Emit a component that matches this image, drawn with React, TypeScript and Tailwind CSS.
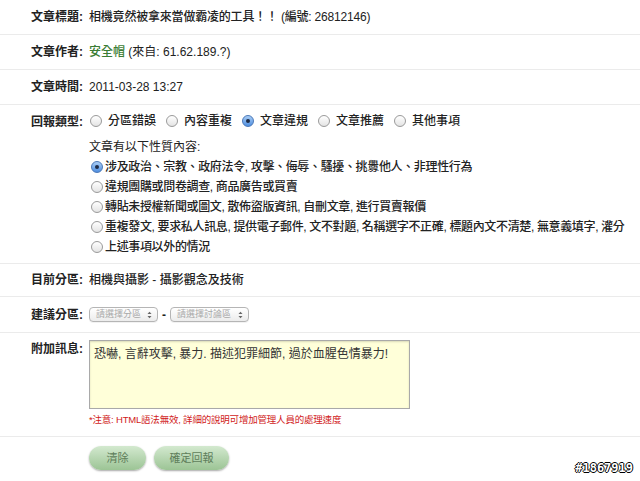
import React from 'react';

const font = { fontFamily: '"Liberation Sans", "Noto Sans CJK TC", sans-serif' };

const Radio: React.FC<{ checked?: boolean }> = ({ checked }) => (
  <span
    className={`inline-flex items-center justify-center w-[12px] h-[12px] rounded-full border shrink-0 ${
      checked
        ? 'border-[#4a78b8] bg-gradient-to-b from-[#a9cdf5] to-[#4f8fe0]'
        : 'border-[#9a9a9a] bg-gradient-to-b from-[#ffffff] to-[#e4e4e4]'
    }`}
  >
    {checked && <span className="w-[4px] h-[4px] rounded-full bg-[#1d2b45]" />}
  </span>
);

const Row: React.FC<{ label: string; className?: string; children: React.ReactNode }> = ({
  label,
  className,
  children,
}) => (
  <div className={`flex border-b border-[#ebebeb] pl-[31px] ${className ?? ''}`}>
    <div className="w-[58px] shrink-0 font-bold text-[#222]">{label}</div>
    <div className="flex-1">{children}</div>
  </div>
);

const Select: React.FC<{ text: string; w: string }> = ({ text, w }) => (
  <span
    className={`${w} h-[15px] inline-flex items-center justify-between rounded-[4px] border border-[#b5b5b5] bg-gradient-to-b from-[#ffffff] to-[#ececec] pl-[6px] pr-[5px] text-[9px] text-[#a8a8a8] shadow-[0_1px_0_rgba(0,0,0,0.05)]`}
  >
    <span className="whitespace-nowrap">{text}</span>
    <svg width="5" height="8" viewBox="0 0 5 8" className="shrink-0">
      <path d="M0.5 3 L2.5 0.8 L4.5 3 Z" fill="#666" />
      <path d="M0.5 5 L2.5 7.2 L4.5 5 Z" fill="#666" />
    </svg>
  </span>
);

export default function App() {
  const types = [
    { t: '分區錯誤' },
    { t: '內容重複' },
    { t: '文章違規', c: true },
    { t: '文章推薦' },
    { t: '其他事項' },
  ];
  const reasons = [
    { t: '涉及政治、宗教、政府法令, 攻擊、侮辱、騷擾、挑釁他人、非理性行為', c: true },
    { t: '違規團購或問卷調查, 商品廣告或買賣' },
    { t: '轉貼未授權新聞或圖文, 散佈盜版資訊, 自刪文章, 進行買賣報價' },
    { t: '重複發文, 要求私人訊息, 提供電子郵件, 文不對題, 名稱選字不正確, 標題內文不清楚, 無意義填字, 灌分' },
    { t: '上述事項以外的情況' },
  ];

  return (
    <div className="w-[640px] h-[481px] bg-white text-[12px] text-[#222] relative overflow-hidden" style={font}>
      <Row label="文章標題:" className="h-[35px] items-center">
        <span className="font-medium tracking-[-0.2px]">相機竟然被拿來當做霸凌的工具！！ (編號: 26812146)</span>
      </Row>
      <Row label="文章作者:" className="h-[35px] items-center">
        <span className="text-[#3b7d34] font-medium">安全帽</span>
        <span> (來自: 61.62.189.?)</span>
      </Row>
      <Row label="文章時間:" className="h-[35px] items-center">
        <span>2011-03-28 13:27</span>
      </Row>
      <Row label="回報類型:" className="h-[159px] pt-[8px]">
        <div className="flex items-center h-[16px] pl-[1px]">
          {types.map((x) => (
            <span key={x.t} className="flex items-center mr-[10px]">
              <Radio checked={x.c} />
              <span className="ml-[6px] font-medium">{x.t}</span>
            </span>
          ))}
        </div>
        <div className="mt-[10px] h-[16px] leading-[16px]">文章有以下性質內容:</div>
        <div className="mt-[2px]">
          {reasons.map((x) => (
            <div key={x.t} className="flex items-center h-[20px] pl-[2px] whitespace-nowrap">
              <Radio checked={x.c} />
              <span className="ml-[2px] font-medium tracking-[-0.35px]">{x.t}</span>
            </div>
          ))}
        </div>
      </Row>
      <Row label="目前分區:" className="h-[33px] items-center">
        <span className="font-medium">相機與攝影 - 攝影觀念及技術</span>
      </Row>
      <Row label="建議分區:" className="h-[36px] items-center">
        <div className="flex items-center">
          <Select text="請選擇分區" w="w-[69px]" />
          <span className="mx-[4px] font-bold">-</span>
          <Select text="請選擇討論區" w="w-[79px]" />
        </div>
      </Row>
      <Row label="附加訊息:" className="h-[104px] pt-[7px]">
        <div className="w-[321px] h-[69px] border border-[#a9a9a9] bg-[#ffffd9] px-[4px] py-[4px] text-[12px] text-[#333] whitespace-nowrap shadow-[inset_0_1px_2px_rgba(0,0,0,0.15)]">
          恐嚇, 言辭攻擊, 暴力. 描述犯罪細節, 過於血腥色情暴力!
        </div>
        <div className="mt-[4px] text-[9.5px] text-[#d11a1a] tracking-[-0.2px]">*注意: HTML語法無效, 詳細的說明可增加管理人員的處理速度</div>
      </Row>
      <div className="flex pl-[89px] pt-[9px] gap-[8px]">
        <button className="w-[57px] h-[24px] rounded-full bg-gradient-to-b from-[#d3e9cf] to-[#9cc495] text-[11px] text-[#5e7d5a] shadow-[0_1px_2px_rgba(0,0,0,0.35)]">
          清除
        </button>
        <button className="w-[75px] h-[24px] rounded-full bg-gradient-to-b from-[#d3e9cf] to-[#9cc495] text-[11px] text-[#5e7d5a] shadow-[0_1px_2px_rgba(0,0,0,0.35)]">
          確定回報
        </button>
      </div>
      <div
        className="absolute right-[7px] bottom-[4px] text-[12px] font-bold text-white"
        style={{ fontFamily: '"DejaVu Sans Mono", monospace', textShadow: '1px 0 #000, -1px 0 #000, 0 1px #000, 0 -1px #000' }}
      >
        #1867919
      </div>
    </div>
  );
}
